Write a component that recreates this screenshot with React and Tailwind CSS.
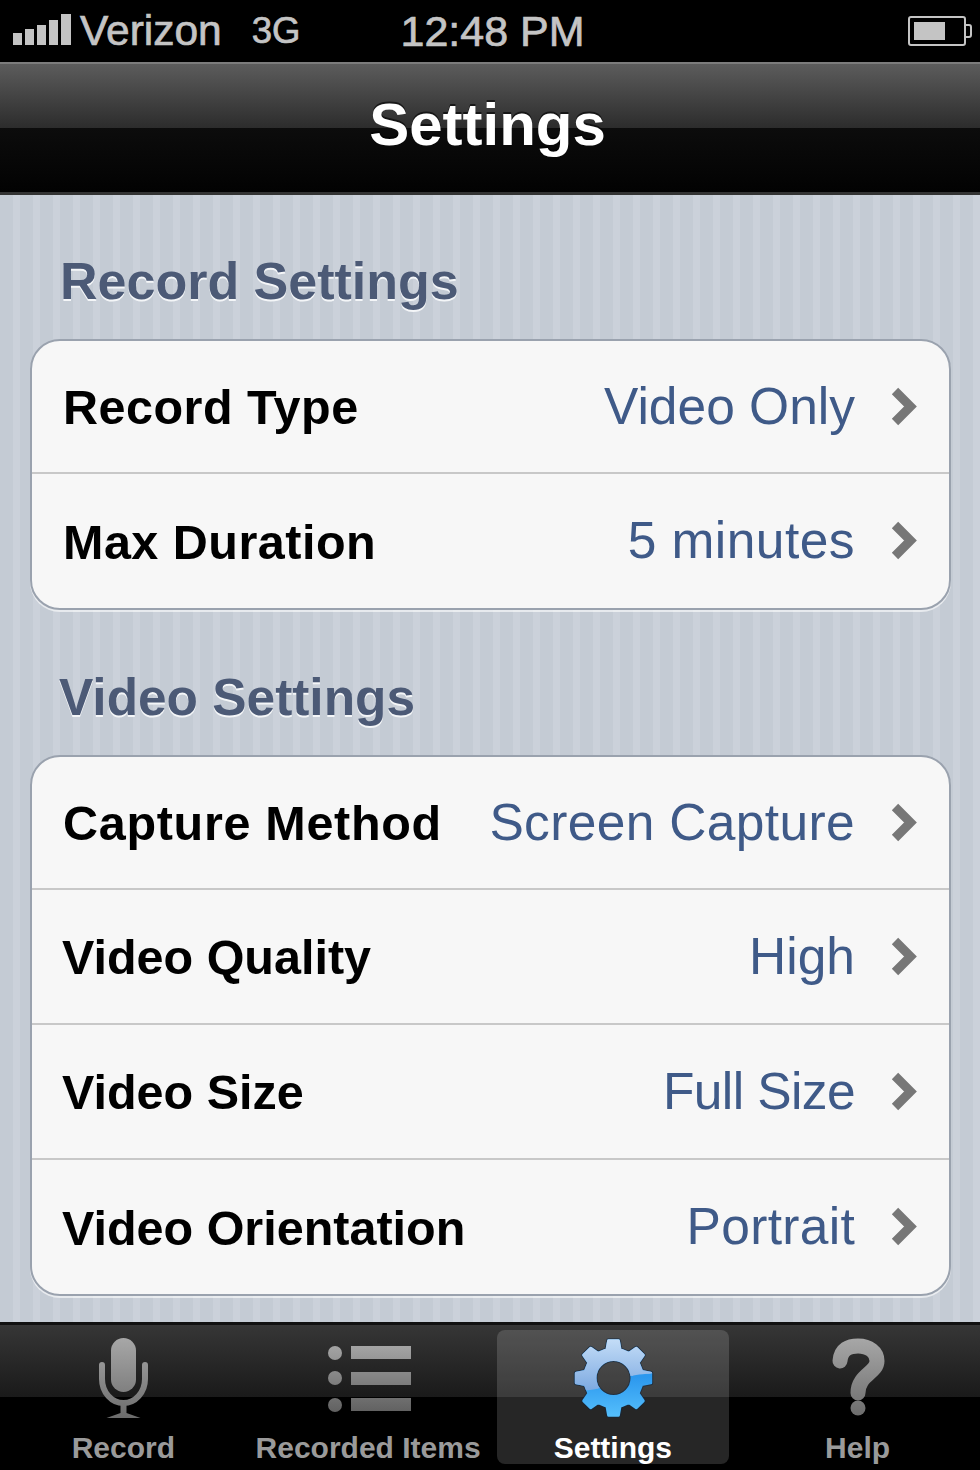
// iPhone style settings screen

const gearPath = (() => {
  const cx = 42.5;
  const cy = 41;
  const pt = (r, deg) => {
    const a = ((deg - 90) * Math.PI) / 180;
    return `${(cx + r * Math.cos(a)).toFixed(2)} ${(cy + r * Math.sin(a)).toFixed(2)}`;
  };
  let d = "";
  for (let i = 0; i < 8; i++) {
    const c = i * 45;
    d += `${i === 0 ? "M" : "L"}${pt(29, c - 13)} L${pt(37.5, c - 7.5)} L${pt(37.5, c + 7.5)} L${pt(29, c + 13)} `;
  }
  d += "Z ";
  d += `M${cx - 18.5} ${cy} a18.5 18.5 0 1 0 37 0 a18.5 18.5 0 1 0 -37 0 Z`;
  return d;
})();

function Chevron() {
  return (
    <svg width="28" height="40" viewBox="0 0 28 40" className="ml-[36px] shrink-0">
      <path d="M4 4 L19.5 19.5 L4 35" fill="none" stroke="#777777" strokeWidth="9" />
    </svg>
  );
}

function SignalBars() {
  return (
    <svg width="60" height="32" viewBox="0 0 60 32" fill="#c4c4c4" className="mb-[2px]">
      <rect x="1" y="19" width="9" height="12" />
      <rect x="13" y="15" width="9" height="16" />
      <rect x="25" y="11" width="9" height="20" />
      <rect x="37" y="6" width="9" height="25" />
      <rect x="49" y="0" width="10" height="31" />
    </svg>
  );
}

function Battery() {
  return (
    <svg width="64" height="30" viewBox="0 0 64 30">
      <rect x="1" y="1" width="56" height="28" rx="2" fill="none" stroke="#c4c4c4" strokeWidth="2" />
      <rect x="6" y="6" width="31" height="18" fill="#c4c4c4" />
      <path d="M57 9 h4 a2 2 0 0 1 2 2 v8 a2 2 0 0 1 -2 2 h-4" fill="none" stroke="#c4c4c4" strokeWidth="2" />
    </svg>
  );
}

function MicIcon() {
  return (
    <svg width="84" height="84" viewBox="0 0 84 84">
      <defs>
        <linearGradient id="micFill" gradientUnits="userSpaceOnUse" x1="0" y1="0" x2="0" y2="82">
          <stop offset="0" stopColor="#a8a8a8" />
          <stop offset="1" stopColor="#6c6c6c" />
        </linearGradient>
      </defs>
      <rect x="30" y="1" width="25" height="54" rx="12.5" fill="url(#micFill)" />
      <path d="M21 28 v14 a21.5 24 0 0 0 43 0 v-14" fill="none" stroke="url(#micFill)" strokeWidth="6" strokeLinecap="round" />
      <path d="M39.5 65 h6 v11 l14 5 h-34 l14 -5 z" fill="url(#micFill)" />
    </svg>
  );
}

function ListIcon() {
  return (
    <svg width="100" height="84" viewBox="0 0 100 84">
      <defs>
        <linearGradient id="listFill" gradientUnits="userSpaceOnUse" x1="0" y1="5" x2="0" y2="76">
          <stop offset="0" stopColor="#a8a8a8" />
          <stop offset="1" stopColor="#606060" />
        </linearGradient>
      </defs>
      <g fill="url(#listFill)">
        <circle cx="17" cy="16" r="7" />
        <circle cx="17" cy="41" r="7" />
        <circle cx="17" cy="68" r="7" />
        <rect x="33" y="9" width="60" height="13" />
        <rect x="33" y="35" width="60" height="13" />
        <rect x="33" y="61" width="60" height="13" />
      </g>
    </svg>
  );
}

function GearIcon() {
  return (
    <svg width="84" height="84" viewBox="0 0 84 84">
      <defs>
        <linearGradient id="gearLow" gradientUnits="userSpaceOnUse" x1="0" y1="40" x2="0" y2="80">
          <stop offset="0" stopColor="#2c98ee" />
          <stop offset="1" stopColor="#55bffc" />
        </linearGradient>
        <linearGradient id="gearTop" gradientUnits="userSpaceOnUse" x1="0" y1="2" x2="0" y2="55">
          <stop offset="0" stopColor="#c4ddf7" />
          <stop offset="1" stopColor="#7ba8e0" />
        </linearGradient>
        <clipPath id="gearGloss">
          <path d="M0 54 C20 54 30 52 42 45 C50 40 60 38 84 36 V0 H0 Z" />
        </clipPath>
      </defs>
      <path d={gearPath} fill="#10263f" fillOpacity="0.6" stroke="#10263f" strokeOpacity="0.6" strokeWidth="5" strokeLinejoin="round" fillRule="evenodd" />
      <path d={gearPath} fill="url(#gearLow)" stroke="url(#gearLow)" strokeWidth="3" strokeLinejoin="round" fillRule="evenodd" />
      <g clipPath="url(#gearGloss)">
        <path d={gearPath} fill="url(#gearTop)" stroke="url(#gearTop)" strokeWidth="3" strokeLinejoin="round" fillRule="evenodd" />
      </g>
    </svg>
  );
}

function HelpIcon() {
  return (
    <svg width="84" height="84" viewBox="0 0 84 84">
      <defs>
        <linearGradient id="helpFill" gradientUnits="userSpaceOnUse" x1="0" y1="0" x2="0" y2="80">
          <stop offset="0" stopColor="#a8a8a8" />
          <stop offset="1" stopColor="#6c6c6c" />
        </linearGradient>
      </defs>
      <path
        d="M24 24 C25 12 33 9 42 9 C53 9 61 15 61 24 C61 36 42 38 42 56"
        fill="none"
        stroke="url(#helpFill)"
        strokeWidth="15"
        strokeLinecap="round"
      />
      <circle cx="42" cy="71" r="7.5" fill="url(#helpFill)" />
    </svg>
  );
}

const recordRows = [
  { label: "Record Type", value: "Video Only", labelClass: "tracking-[0.5px]" },
  { label: "Max Duration", value: "5 minutes", labelClass: "tracking-[0.5px]", valueClass: "tracking-[0.45px]" },
];

const videoRows = [
  { label: "Capture Method", value: "Screen Capture", labelClass: "tracking-[0.7px]", valueClass: "tracking-[0.35px]" },
  { label: "Video Quality", value: "High", labelClass: "-ml-[1px]" },
  { label: "Video Size", value: "Full Size", labelClass: "-ml-[1px]", valueClass: "-tracking-[0.6px]" },
  { label: "Video Orientation", value: "Portrait", labelClass: "-ml-[1px]", valueClass: "tracking-[0.3px]" },
];

const tabs = [
  { label: "Record", Icon: MicIcon },
  { label: "Recorded Items", Icon: ListIcon },
  { label: "Settings", Icon: GearIcon, active: true },
  { label: "Help", Icon: HelpIcon },
];

function SettingsCard({ rows }) {
  return (
    <div className="mt-[27px] rounded-[30px] border-2 border-[#9aa2ae] bg-[#f7f7f7] shadow-[0_2px_0_rgba(255,255,255,0.6)] divide-y-2 divide-[#c8c8c8]">
      {rows.map((row) => (
        <div key={row.label} className="flex items-center h-[135px] first:h-[133px] last:h-[134px] pl-[31px] pr-[30px]">
          <span className={`pt-[2px] text-[48.5px] font-bold text-black whitespace-nowrap ${row.labelClass || ""}`}>
            {row.label}
          </span>
          <span className={`ml-auto text-[51.5px] text-[#3f5a88] whitespace-nowrap ${row.valueClass || ""}`}>
            {row.value}
          </span>
          <Chevron />
        </div>
      ))}
    </div>
  );
}

export default function App() {
  return (
    <div className="w-[980px] h-[1470px] flex flex-col overflow-hidden bg-black font-['Liberation_Sans',Arial,sans-serif]">
      {/* Status bar */}
      <div className="h-[62px] shrink-0 flex items-center pl-[12px] pr-[8px] text-[#c4c4c4] [-webkit-text-stroke:0.7px_#c4c4c4]">
        <SignalBars />
        <span className="ml-[8px] text-[42.5px] leading-none">Verizon</span>
        <span className="ml-[30px] text-[36.5px] leading-none">3G</span>
        <span className="ml-[100px] text-[43px] leading-none">12:48 PM</span>
        <span className="ml-auto">
          <Battery />
        </span>
      </div>

      {/* Nav bar */}
      <div className="h-[133px] shrink-0 flex items-center justify-center pr-[5px] pb-[6px] border-t-2 border-t-[#7c7c7c] border-b-[3px] border-b-[#333333] bg-[linear-gradient(180deg,#5c5c5c_0,#2c2c2c_64px,#0c0c0c_64px,#020202_128px)]">
        <h1 className="text-[60px] leading-none font-bold text-white [text-shadow:0_-2px_0_rgba(0,0,0,0.6)]">Settings</h1>
      </div>

      {/* Content */}
      <div className="flex-1 pt-[57px] pl-[30px] pr-[29px] bg-[repeating-linear-gradient(90deg,#c4cbd4_0,#c4cbd4_13px,#cbd1da_13px,#cbd1da_20px)]">
        <h2 className="pl-[30px] h-[60px] text-[52px] leading-[58px] font-bold text-[#4c5a76] [text-shadow:0_2px_0_#f4f6f8]">
          Record Settings
        </h2>
        <SettingsCard rows={recordRows} />
        <div className="h-[58px]" />
        <h2 className="pl-[29px] h-[60px] text-[51.4px] leading-[58px] font-bold text-[#4c5a76] [text-shadow:0_2px_0_#f4f6f8]">
          Video Settings
        </h2>
        <SettingsCard rows={videoRows} />
      </div>

      {/* Tab bar */}
      <div className="h-[148px] shrink-0 grid grid-cols-4 pl-[1px] pt-[5px] pb-[6px] border-t-[3px] border-t-[#111111] bg-[linear-gradient(180deg,#363636_0,#1a1a1a_72px,#000000_72px,#000000_100%)]">
        {tabs.map(({ label, Icon, active }) => (
          <div
            key={label}
            className={
              active
                ? "mx-[6px] flex flex-col items-center pt-[7px] rounded-lg bg-white/15"
                : "mx-[6px] flex flex-col items-center pt-[7px]"
            }
          >
            <Icon />
            <span
              className={
                active
                  ? "mt-[12px] text-[30px] leading-[30px] font-bold text-white whitespace-nowrap"
                  : "mt-[12px] text-[30px] leading-[30px] font-bold text-[#9a9a9a] whitespace-nowrap"
              }
            >
              {label}
            </span>
          </div>
        ))}
      </div>
    </div>
  );
}
